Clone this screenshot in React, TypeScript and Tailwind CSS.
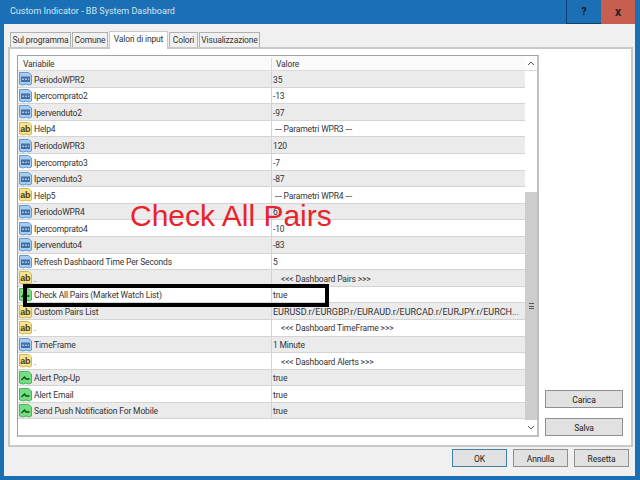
import React from "react";

type Kind = "num" | "ab" | "bool";
const rows: [Kind, string, string, number][] = [
  ["num", "PeriodoWPR2", "35", 1],
  ["num", "Ipercomprato2", "-13", 1],
  ["num", "Ipervenduto2", "-97", 1],
  ["ab", "Help4", "--- Parametri WPR3 ---", 3],
  ["num", "PeriodoWPR3", "120", 1],
  ["num", "Ipercomprato3", "-7", 1],
  ["num", "Ipervenduto3", "-87", 1],
  ["ab", "Help5", "--- Parametri WPR4 ---", 3],
  ["num", "PeriodoWPR4", "6", 1],
  ["num", "Ipercomprato4", "-10", 1],
  ["num", "Ipervenduto4", "-83", 1],
  ["num", "Refresh Dashbaord Time Per Seconds", "5", 1],
  ["ab", ".", "<<< Dashboard Pairs >>>", 9],
  ["bool", "Check All Pairs (Market Watch List)", "true", 1],
  ["ab", "Custom Pairs List", "EURUSD.r/EURGBP.r/EURAUD.r/EURCAD.r/EURJPY.r/EURCH...", 1],
  ["ab", ".", "<<< Dashboard TimeFrame >>>", 9],
  ["num", "TimeFrame", "1 Minute", 1],
  ["ab", ".", "<<< Dashboard Alerts >>>", 9],
  ["bool", "Alert Pop-Up", "true", 1],
  ["bool", "Alert Email", "true", 1],
  ["bool", "Send Push Notification For Mobile", "true", 1],
];

function Icon({ kind }: { kind: Kind }) {
  const c =
    kind === "num"
      ? { fill: "#a9cdf0", stroke: "#5f9ad6", dark: "#1f4f8f" }
      : kind === "ab"
      ? { fill: "#f7e48c", stroke: "#d2b650", dark: "#4a3a10" }
      : { fill: "#74de82", stroke: "#4bb35c", dark: "#0f4a1a" };
  return (
    <svg width="13" height="15" viewBox="0 0 13 15" className="shrink-0">
      <path d="M.5 1.5 H9.5 L12.5 4 V13 L10 14 L7 13 L4 14 L.5 13 Z" fill={c.fill} stroke={c.stroke} />
      {kind === "num" && <rect x="2" y="5.5" width="9" height="5.5" fill={c.dark} opacity="0.75" />}
      {kind === "num" && <path d="M3 8.2 H10" stroke="#d5e6f7" strokeWidth="1" strokeDasharray="2 1" />}
      {kind === "ab" && (
        <text x="1.2" y="11" fontSize="9" fontWeight="700" fill={c.dark} fontFamily="Liberation Sans, sans-serif">
          ab
        </text>
      )}
      {kind === "bool" && <path d="M2.5 10 L5.5 7 L7 9 H10.5" stroke={c.dark} strokeWidth="1.3" fill="none" />}
    </svg>
  );
}

function Tab({ label, active, w }: { label: string; active?: boolean; w: string }) {
  return (
    <div
      className={
        (active
          ? "h-[18px] pb-[2px] bg-white border border-b-0 border-[#c8c8c8] relative z-10 -mb-[2px] "
          : "h-[15px] bg-[#f0f0f0] border border-b-0 border-[#b0b0b0] ") +
        "flex items-center justify-center whitespace-nowrap " +
        w
      }
    >
      {label}
    </div>
  );
}

function Btn({ label, className }: { label: string; className: string }) {
  return (
    <div className={"flex items-center justify-center pt-[2px] bg-[#e1e1e1] border text-[#222] " + className}>
      {label}
    </div>
  );
}

export default function App() {
  return (
    <div className="w-[640px] h-[480px] bg-[#1a6fb5] flex flex-col overflow-hidden text-[8.5px] tracking-[-0.15px] leading-none text-[#333] font-['Roboto',sans-serif]">
      <div className="h-[24px] shrink-0 flex items-start">
        <div className="pl-[10px] pt-[7px] flex-1 text-[9px] tracking-normal text-[#d5e6f5]">Custom Indicator - BB System Dashboard</div>
        <div className="w-[35px] h-[24px] flex items-center justify-center border-l border-b border-[#0e3f6e] text-[10px] font-bold text-[#111]">?</div>
        <div className="w-[34px] h-[24px] flex items-center justify-center bg-[#c75f50] text-[12px] font-bold text-[#222]">x</div>
        <div className="w-[5px]" />
      </div>
      <div className="ml-[4px] mr-[5px] h-[452px] bg-[#f0f0f0] flex flex-col pl-[4px] pr-[2px] pt-[7px]">
        <div className="flex items-end h-[16px] pl-[2px] gap-px">
          <Tab label="Sul programma" w="w-[61px]" />
          <Tab label="Comune" w="w-[36px]" />
          <Tab label="Valori di input" active w="w-[59px]" />
          <Tab label="Colori" w="w-[29px]" />
          <Tab label="Visualizzazione" w="w-[61px]" />
        </div>
        <div className="h-[400px] bg-white border-2 border-[#c8c8c8] flex pl-[7px] pt-[6px] gap-[6px]">
          <div className="w-[522px] h-[382px] border border-[#a0a0a0] border-r-2 border-r-[#c0c0c0] border-b-2 border-b-[#c0c0c0] flex">
            <div className="w-[507px] flex flex-col relative">
              <div className="h-[15px] shrink-0 flex pt-[2px] bg-[#fafafa] border-b border-[#dcdcdc]">
                <div className="w-[254px] pl-[5px] flex items-center border-r border-[#dcdcdc]">Variabile</div>
                <div className="pl-[4px] flex items-center">Valore</div>
              </div>
              {rows.map(([kind, name, val, pad], i) => (
                <div
                  key={i}
                  className={"h-[16.6px] shrink-0 flex border-b border-[#d4d4d4] " + (i % 2 === 0 ? "bg-[#ebebeb]" : "bg-white")}
                >
                  <div className="w-[254px] flex items-center pl-[1px] gap-[2px] border-r border-[#d4d4d4] whitespace-nowrap">
                    <Icon kind={kind} />
                    <span className="pt-[2px]">{name}</span>
                  </div>
                  <div
                    className={"flex-1 flex items-center pt-[2px] whitespace-nowrap overflow-hidden " + (val.length > 30 ? "text-[9px] tracking-normal" : "")}
                    style={{ paddingLeft: pad }}
                  >
                    {val}
                  </div>
                </div>
              ))}
              <div className="absolute left-[5px] top-[228px] w-[306px] h-[23px] border-4 border-black pointer-events-none" />
              <div className="absolute left-[112px] top-[145px] text-[30px] tracking-normal leading-none text-[#e8232b] whitespace-nowrap font-['Liberation_Sans',sans-serif]">
                Check All Pairs
              </div>
            </div>
            <div className="w-[12px] flex flex-col bg-white">
              <div className="h-[15px] shrink-0 flex items-center justify-center border-b border-[#d8d8d8]">
                <svg width="8" height="5" viewBox="0 0 8 5"><path d="M1 4 L4 1 L7 4" fill="none" stroke="#555" /></svg>
              </div>
              <div className="flex-1" />
              <div className="h-[228px] shrink-0 bg-[#cdcdcd] flex items-center justify-center">
                <div className="w-[5px] h-[6px] border-y border-[#555] flex items-center"><div className="w-full h-px bg-[#555]" /></div>
              </div>
              <div className="h-[15px] shrink-0 flex items-center justify-center">
                <svg width="8" height="5" viewBox="0 0 8 5"><path d="M1 1 L4 4 L7 1" fill="none" stroke="#555" /></svg>
              </div>
            </div>
          </div>
          <div className="flex flex-col justify-end gap-[10px] pb-[9px]">
            <Btn label="Carica" className="w-[78px] h-[18px] border-[#8f8f8f]" />
            <Btn label="Salva" className="w-[78px] h-[18px] border-[#8f8f8f]" />
          </div>
        </div>
        <div className="flex justify-end gap-[6px] pt-[2px] pr-[4px]">
          <Btn label="OK" className="w-[55px] h-[18px] border-[#3f7fa8]" />
          <Btn label="Annulla" className="w-[55px] h-[18px] border-[#8f8f8f]" />
          <Btn label="Resetta" className="w-[55px] h-[18px] border-[#8f8f8f]" />
        </div>
      </div>
    </div>
  );
}
